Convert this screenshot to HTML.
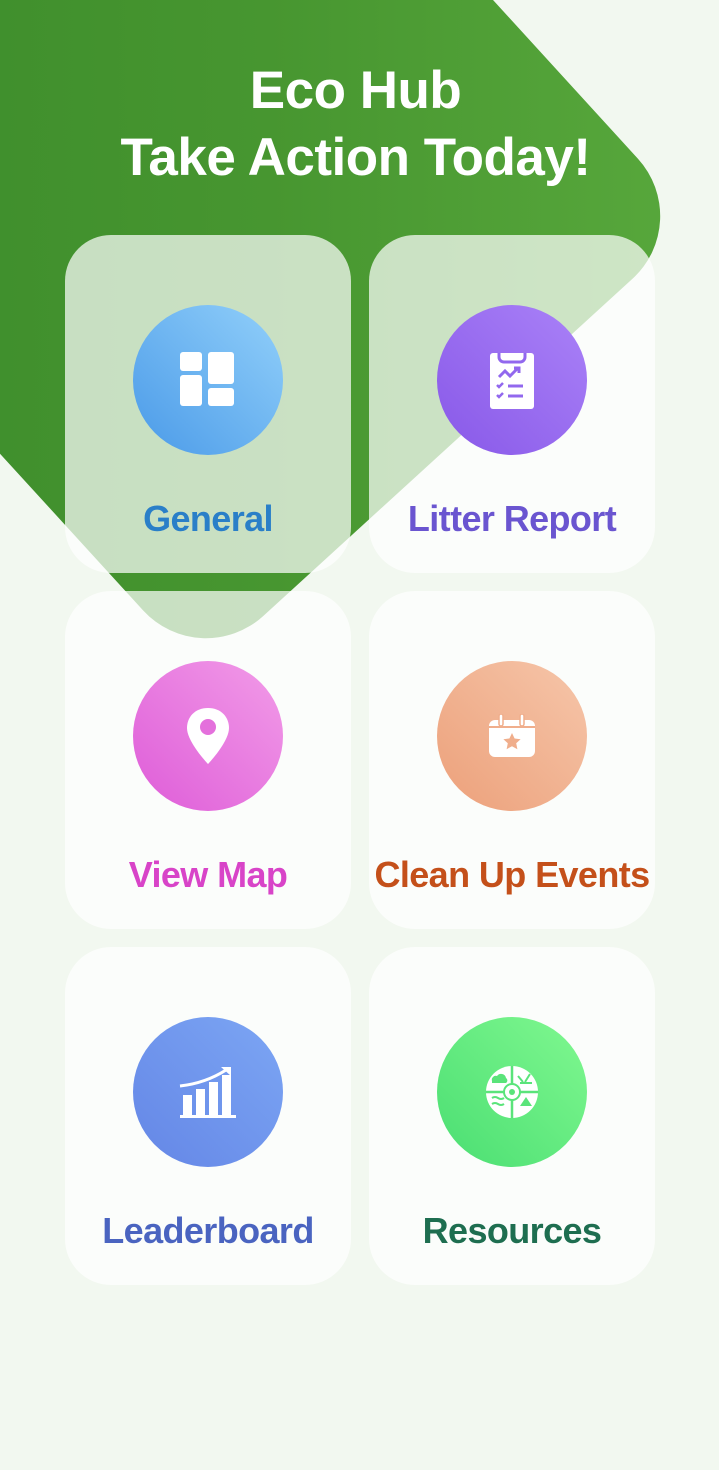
<!DOCTYPE html>
<html><head><meta charset="utf-8"><style>
*{margin:0;padding:0;box-sizing:border-box}
html,body{width:719px;height:1470px;overflow:hidden;background:#f2f8f0;font-family:"Liberation Sans",sans-serif}
.blob{position:absolute;left:-113px;top:-135px;width:670px;height:670px;border-radius:85px;transform:rotate(-42.4deg);background:linear-gradient(132deg,#3a8a2a,#479630 55%,#58a83c)}
.title{position:absolute;left:0;width:711px;top:57px;text-align:center;color:#fff;font-weight:bold;font-size:53px;line-height:67px;letter-spacing:-0.5px}
.card{position:absolute;width:286px;height:338px;border-radius:46px;background:rgba(255,255,255,0.71)}
.circ{position:absolute;left:68px;top:70px;width:150px;height:150px;border-radius:50%;display:flex;align-items:center;justify-content:center}
.lab{position:absolute;left:-30px;right:-30px;top:263px;text-align:center;font-weight:bold;font-size:36px;letter-spacing:-0.6px;white-space:nowrap}
</style></head><body>
<div class="blob"></div>
<div class="title">Eco Hub<br>Take Action Today!</div>

<div class="card" style="left:65px;top:235px">
 <div class="circ" style="background:linear-gradient(45deg,#4a9ae8,#92d0fa)">
  <svg width="60" height="60" viewBox="0 0 60 60" fill="#fff"><rect x="2" y="2" width="22" height="19" rx="3"/><rect x="30" y="2" width="26" height="32" rx="3"/><rect x="2" y="25" width="22" height="31" rx="3"/><rect x="30" y="38" width="26" height="18" rx="3"/></svg>
 </div>
 <div class="lab" style="color:#2a7fc8">General</div>
</div>
<div class="card" style="left:369px;top:235px">
 <div class="circ" style="background:linear-gradient(45deg,#8858e8,#aa82f8)">
  <svg width="50" height="60" viewBox="0 0 50 60"><rect x="3" y="3" width="44" height="56" rx="3" fill="#fff"/><path d="M12 3 v4 a5 5 0 0 0 5 5 h16 a5 5 0 0 0 5 -5 v-4" fill="none" stroke="#9268ee" stroke-width="3"/><path d="M12 27 l6-6 5 5 8-8 M27 18h5v5" fill="none" stroke="#9268ee" stroke-width="3"/><path d="M10 35 l2 2 4-4 M10 45 l2 2 4-4" fill="none" stroke="#9268ee" stroke-width="2.5"/><path d="M21 36h15 M21 46h15" stroke="#9268ee" stroke-width="3"/></svg>
 </div>
 <div class="lab" style="color:#6a55d0">Litter Report</div>
</div>

<div class="card" style="left:65px;top:591px">
 <div class="circ" style="background:linear-gradient(45deg,#de5cd8,#f29ce8)">
  <svg width="46" height="60" viewBox="0 0 46 60"><path d="M23 2 C10 2 2 11 2 22 C2 36 23 58 23 58 C23 58 44 36 44 22 C44 11 36 2 23 2Z" fill="#fff"/><circle cx="23" cy="21" r="8" fill="#e470dc"/></svg>
 </div>
 <div class="lab" style="color:#d844c8">View Map</div>
</div>
<div class="card" style="left:369px;top:591px">
 <div class="circ" style="background:linear-gradient(45deg,#eca07a,#f6c6aa)">
  <svg width="48" height="44" viewBox="0 0 48 44"><rect x="1" y="6" width="46" height="37" rx="6" fill="#fff"/><path d="M1 13 h46" stroke="#f0ae8c" stroke-width="2"/><rect x="11" y="0" width="4" height="12" rx="2" fill="#fff" stroke="#f0ae8c" stroke-width="1.5"/><rect x="32" y="0" width="4" height="12" rx="2" fill="#fff" stroke="#f0ae8c" stroke-width="1.5"/><path d="M24 19 l2.6 5.5 6 .7 -4.4 4 1.2 6 -5.4 -3 -5.4 3 1.2 -6 -4.4 -4 6 -.7z" fill="#f0ae8c"/></svg>
 </div>
 <div class="lab" style="color:#c4501a">Clean Up Events</div>
</div>

<div class="card" style="left:65px;top:947px">
 <div class="circ" style="background:linear-gradient(45deg,#6486e6,#7ca6f4)">
  <svg width="60" height="60" viewBox="0 0 60 60" fill="#fff"><path d="M2 24 C20 22 34 17 48 8" fill="none" stroke="#fff" stroke-width="3"/><path d="M43 5 h10 v9z"/><rect x="5" y="33" width="9" height="20"/><rect x="18" y="27" width="9" height="26"/><rect x="31" y="20" width="9" height="33"/><rect x="44" y="13" width="9" height="40"/><rect x="2" y="53" width="56" height="3"/></svg>
 </div>
 <div class="lab" style="color:#4a64c0">Leaderboard</div>
</div>
<div class="card" style="left:369px;top:947px">
 <div class="circ" style="background:linear-gradient(45deg,#4ade72,#80f890)">
  <svg width="56" height="56" viewBox="0 0 56 56"><circle cx="28" cy="28" r="26" fill="#fff"/><path d="M28 2v52 M2 28h52" stroke="#5ae47a" stroke-width="2.5"/><circle cx="28" cy="28" r="8" fill="#fff" stroke="#5ae47a" stroke-width="2"/><circle cx="28" cy="28" r="3" fill="#5ae47a"/><path d="M8 17 a4 4 0 0 1 5-5 a5 5 0 0 1 9 2 a3 3 0 0 1 0 5 h-14z" fill="#5ae47a"/><path d="M34 12 l5 6 M46 10 l-5 8 M36 19h12" stroke="#5ae47a" stroke-width="2" fill="none"/><path d="M8 34 q3-2 6 0 t6 0 M8 40 q3-2 6 0 t6 0" stroke="#5ae47a" stroke-width="2" fill="none"/><path d="M36 42 l6-9 6 9z" fill="#5ae47a"/></svg>
 </div>
 <div class="lab" style="color:#1e6e50">Resources</div>
</div>
</body></html>
